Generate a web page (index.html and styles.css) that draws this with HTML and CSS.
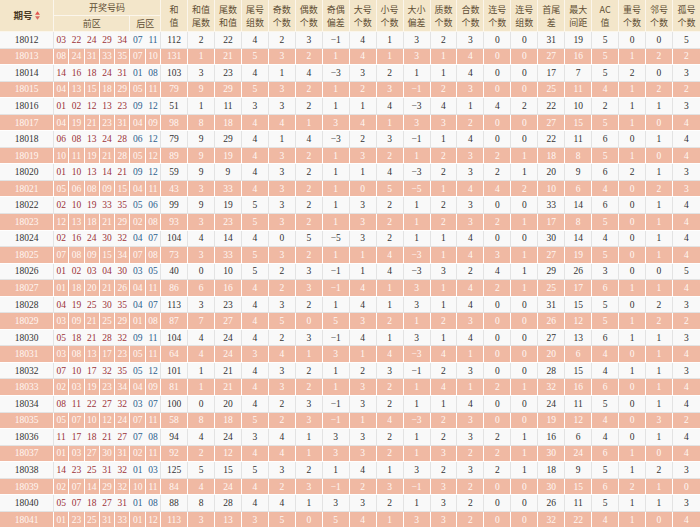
FILE: index.html
```html
<!DOCTYPE html>
<html lang="zh-CN">
<head>
<meta charset="utf-8">
<title>开奖号码走势</title>
<link rel="stylesheet" href="styles.css">
</head>
<body>
<table class="tbl">
<colgroup>
<col class="c-id">
<col class="c-ball"><col class="c-ball"><col class="c-ball"><col class="c-ball"><col class="c-ball"><col class="c-ball"><col class="c-ball">
<col class="c-st"><col class="c-st"><col class="c-st"><col class="c-st"><col class="c-st"><col class="c-st"><col class="c-st"><col class="c-st"><col class="c-st"><col class="c-st">
<col class="c-st"><col class="c-st"><col class="c-st"><col class="c-st"><col class="c-st"><col class="c-st"><col class="c-st"><col class="c-st"><col class="c-st"><col class="c-st">
</colgroup>
<thead>
<tr class="h1">
<th rowspan="2" class="qh">期号<svg class="sort" width="5" height="9" viewBox="0 0 5 9"><polygon points="0,3.8 2.5,0.3 5,3.8" fill="#e2544f"/><polygon points="0,5.2 5,5.2 2.5,8.7" fill="#d86a62"/></svg></th>
<th colspan="7" class="kj">开奖号码</th>
<th rowspan="2">和<br>值</th>
<th rowspan="2">和值<br>尾数</th>
<th rowspan="2">尾数<br>和值</th>
<th rowspan="2">尾号<br>组数</th>
<th rowspan="2">奇数<br>个数</th>
<th rowspan="2">偶数<br>个数</th>
<th rowspan="2">奇偶<br>偏差</th>
<th rowspan="2">大号<br>个数</th>
<th rowspan="2">小号<br>个数</th>
<th rowspan="2">大小<br>偏差</th>
<th rowspan="2">质数<br>个数</th>
<th rowspan="2">合数<br>个数</th>
<th rowspan="2">连号<br>个数</th>
<th rowspan="2">连号<br>组数</th>
<th rowspan="2">首尾<br>差</th>
<th rowspan="2">最大<br>间距</th>
<th rowspan="2">AC<br>值</th>
<th rowspan="2">重号<br>个数</th>
<th rowspan="2">邻号<br>个数</th>
<th rowspan="2" class="last">孤号<br>个数</th>
</tr>
<tr class="h2">
<th colspan="5">前区</th>
<th colspan="2">后区</th>
</tr>
</thead>
<tbody>
<tr class="w"><td>18012</td><td class="f">03</td><td class="f">22</td><td class="f">24</td><td class="f">29</td><td class="f">34</td><td class="b">07</td><td class="b bl">11</td><td>112</td><td>2</td><td>22</td><td>4</td><td>2</td><td>3</td><td>−1</td><td>4</td><td>1</td><td>3</td><td>2</td><td>3</td><td>0</td><td>0</td><td>31</td><td>19</td><td>5</td><td>0</td><td>0</td><td>5</td></tr>
<tr class="p"><td>18013</td><td class="f">08</td><td class="f">24</td><td class="f">31</td><td class="f">33</td><td class="f">35</td><td class="b">07</td><td class="b bl">10</td><td>131</td><td>1</td><td>21</td><td>5</td><td>3</td><td>2</td><td>1</td><td>4</td><td>1</td><td>3</td><td>1</td><td>4</td><td>0</td><td>0</td><td>27</td><td>16</td><td>5</td><td>1</td><td>2</td><td>2</td></tr>
<tr class="w"><td>18014</td><td class="f">14</td><td class="f">16</td><td class="f">18</td><td class="f">24</td><td class="f">31</td><td class="b">01</td><td class="b bl">08</td><td>103</td><td>3</td><td>23</td><td>4</td><td>1</td><td>4</td><td>−3</td><td>3</td><td>2</td><td>1</td><td>1</td><td>4</td><td>0</td><td>0</td><td>17</td><td>7</td><td>5</td><td>2</td><td>0</td><td>3</td></tr>
<tr class="p"><td>18015</td><td class="f">04</td><td class="f">13</td><td class="f">15</td><td class="f">18</td><td class="f">29</td><td class="b">05</td><td class="b bl">11</td><td>79</td><td>9</td><td>29</td><td>5</td><td>3</td><td>2</td><td>1</td><td>2</td><td>3</td><td>−1</td><td>2</td><td>3</td><td>0</td><td>0</td><td>25</td><td>11</td><td>4</td><td>1</td><td>2</td><td>2</td></tr>
<tr class="w"><td>18016</td><td class="f">01</td><td class="f">02</td><td class="f">12</td><td class="f">13</td><td class="f">23</td><td class="b">09</td><td class="b bl">12</td><td>51</td><td>1</td><td>11</td><td>3</td><td>3</td><td>2</td><td>1</td><td>1</td><td>4</td><td>−3</td><td>4</td><td>1</td><td>4</td><td>2</td><td>22</td><td>10</td><td>2</td><td>1</td><td>1</td><td>3</td></tr>
<tr class="p"><td>18017</td><td class="f">04</td><td class="f">19</td><td class="f">21</td><td class="f">23</td><td class="f">31</td><td class="b">04</td><td class="b bl">09</td><td>98</td><td>8</td><td>18</td><td>4</td><td>4</td><td>1</td><td>3</td><td>4</td><td>1</td><td>3</td><td>3</td><td>2</td><td>0</td><td>0</td><td>27</td><td>15</td><td>5</td><td>1</td><td>0</td><td>4</td></tr>
<tr class="w"><td>18018</td><td class="f">06</td><td class="f">08</td><td class="f">13</td><td class="f">24</td><td class="f">28</td><td class="b">06</td><td class="b bl">12</td><td>79</td><td>9</td><td>29</td><td>4</td><td>1</td><td>4</td><td>−3</td><td>2</td><td>3</td><td>−1</td><td>1</td><td>4</td><td>0</td><td>0</td><td>22</td><td>11</td><td>6</td><td>0</td><td>1</td><td>4</td></tr>
<tr class="p"><td>18019</td><td class="f">10</td><td class="f">11</td><td class="f">19</td><td class="f">21</td><td class="f">28</td><td class="b">05</td><td class="b bl">12</td><td>89</td><td>9</td><td>19</td><td>4</td><td>3</td><td>2</td><td>1</td><td>3</td><td>2</td><td>1</td><td>2</td><td>3</td><td>2</td><td>1</td><td>18</td><td>8</td><td>5</td><td>1</td><td>0</td><td>4</td></tr>
<tr class="w"><td>18020</td><td class="f">01</td><td class="f">10</td><td class="f">13</td><td class="f">14</td><td class="f">21</td><td class="b">09</td><td class="b bl">12</td><td>59</td><td>9</td><td>9</td><td>4</td><td>3</td><td>2</td><td>1</td><td>1</td><td>4</td><td>−3</td><td>2</td><td>3</td><td>2</td><td>1</td><td>20</td><td>9</td><td>6</td><td>2</td><td>1</td><td>3</td></tr>
<tr class="p"><td>18021</td><td class="f">05</td><td class="f">06</td><td class="f">08</td><td class="f">09</td><td class="f">15</td><td class="b">04</td><td class="b bl">11</td><td>43</td><td>3</td><td>33</td><td>4</td><td>3</td><td>2</td><td>1</td><td>0</td><td>5</td><td>−5</td><td>1</td><td>4</td><td>4</td><td>2</td><td>10</td><td>6</td><td>4</td><td>0</td><td>2</td><td>3</td></tr>
<tr class="w"><td>18022</td><td class="f">02</td><td class="f">10</td><td class="f">19</td><td class="f">33</td><td class="f">35</td><td class="b">05</td><td class="b bl">06</td><td>99</td><td>9</td><td>19</td><td>5</td><td>3</td><td>2</td><td>1</td><td>3</td><td>2</td><td>1</td><td>2</td><td>3</td><td>0</td><td>0</td><td>33</td><td>14</td><td>6</td><td>0</td><td>1</td><td>4</td></tr>
<tr class="p"><td>18023</td><td class="f">12</td><td class="f">13</td><td class="f">18</td><td class="f">21</td><td class="f">29</td><td class="b">02</td><td class="b bl">08</td><td>93</td><td>3</td><td>23</td><td>5</td><td>3</td><td>2</td><td>1</td><td>3</td><td>2</td><td>1</td><td>2</td><td>3</td><td>2</td><td>1</td><td>17</td><td>8</td><td>5</td><td>0</td><td>1</td><td>4</td></tr>
<tr class="w"><td>18024</td><td class="f">02</td><td class="f">16</td><td class="f">24</td><td class="f">30</td><td class="f">32</td><td class="b">04</td><td class="b bl">07</td><td>104</td><td>4</td><td>14</td><td>4</td><td>0</td><td>5</td><td>−5</td><td>3</td><td>2</td><td>1</td><td>1</td><td>4</td><td>0</td><td>0</td><td>30</td><td>14</td><td>4</td><td>0</td><td>1</td><td>4</td></tr>
<tr class="p"><td>18025</td><td class="f">07</td><td class="f">08</td><td class="f">09</td><td class="f">15</td><td class="f">34</td><td class="b">07</td><td class="b bl">08</td><td>73</td><td>3</td><td>33</td><td>5</td><td>3</td><td>2</td><td>1</td><td>1</td><td>4</td><td>−3</td><td>1</td><td>4</td><td>3</td><td>1</td><td>27</td><td>19</td><td>5</td><td>0</td><td>1</td><td>4</td></tr>
<tr class="w"><td>18026</td><td class="f">01</td><td class="f">02</td><td class="f">03</td><td class="f">04</td><td class="f">30</td><td class="b">03</td><td class="b bl">05</td><td>40</td><td>0</td><td>10</td><td>5</td><td>2</td><td>3</td><td>−1</td><td>1</td><td>4</td><td>−3</td><td>3</td><td>2</td><td>4</td><td>1</td><td>29</td><td>26</td><td>3</td><td>0</td><td>0</td><td>5</td></tr>
<tr class="p"><td>18027</td><td class="f">01</td><td class="f">18</td><td class="f">20</td><td class="f">21</td><td class="f">26</td><td class="b">04</td><td class="b bl">11</td><td>86</td><td>6</td><td>16</td><td>4</td><td>2</td><td>3</td><td>−1</td><td>4</td><td>1</td><td>3</td><td>1</td><td>4</td><td>2</td><td>1</td><td>25</td><td>17</td><td>6</td><td>1</td><td>1</td><td>4</td></tr>
<tr class="w"><td>18028</td><td class="f">04</td><td class="f">19</td><td class="f">25</td><td class="f">30</td><td class="f">35</td><td class="b">04</td><td class="b bl">07</td><td>113</td><td>3</td><td>23</td><td>4</td><td>3</td><td>2</td><td>1</td><td>4</td><td>1</td><td>3</td><td>1</td><td>4</td><td>0</td><td>0</td><td>31</td><td>15</td><td>5</td><td>0</td><td>2</td><td>3</td></tr>
<tr class="p"><td>18029</td><td class="f">03</td><td class="f">09</td><td class="f">21</td><td class="f">25</td><td class="f">29</td><td class="b">01</td><td class="b bl">08</td><td>87</td><td>7</td><td>27</td><td>4</td><td>5</td><td>0</td><td>5</td><td>3</td><td>2</td><td>1</td><td>2</td><td>3</td><td>0</td><td>0</td><td>26</td><td>12</td><td>5</td><td>1</td><td>2</td><td>2</td></tr>
<tr class="w"><td>18030</td><td class="f">05</td><td class="f">18</td><td class="f">21</td><td class="f">28</td><td class="f">32</td><td class="b">09</td><td class="b bl">11</td><td>104</td><td>4</td><td>24</td><td>4</td><td>2</td><td>3</td><td>−1</td><td>4</td><td>1</td><td>3</td><td>1</td><td>4</td><td>0</td><td>0</td><td>27</td><td>13</td><td>6</td><td>1</td><td>1</td><td>3</td></tr>
<tr class="p"><td>18031</td><td class="f">03</td><td class="f">08</td><td class="f">13</td><td class="f">17</td><td class="f">23</td><td class="b">05</td><td class="b bl">11</td><td>64</td><td>4</td><td>24</td><td>3</td><td>4</td><td>1</td><td>3</td><td>1</td><td>4</td><td>−3</td><td>4</td><td>1</td><td>0</td><td>0</td><td>20</td><td>6</td><td>4</td><td>0</td><td>1</td><td>4</td></tr>
<tr class="w"><td>18032</td><td class="f">07</td><td class="f">10</td><td class="f">17</td><td class="f">32</td><td class="f">35</td><td class="b">05</td><td class="b bl">12</td><td>101</td><td>1</td><td>21</td><td>4</td><td>3</td><td>2</td><td>1</td><td>2</td><td>3</td><td>−1</td><td>2</td><td>3</td><td>0</td><td>0</td><td>28</td><td>15</td><td>4</td><td>1</td><td>1</td><td>3</td></tr>
<tr class="p"><td>18033</td><td class="f">02</td><td class="f">03</td><td class="f">19</td><td class="f">23</td><td class="f">34</td><td class="b">04</td><td class="b bl">09</td><td>81</td><td>1</td><td>21</td><td>4</td><td>3</td><td>2</td><td>1</td><td>3</td><td>2</td><td>1</td><td>4</td><td>1</td><td>2</td><td>1</td><td>32</td><td>16</td><td>6</td><td>0</td><td>1</td><td>4</td></tr>
<tr class="w"><td>18034</td><td class="f">08</td><td class="f">11</td><td class="f">22</td><td class="f">27</td><td class="f">32</td><td class="b">03</td><td class="b bl">07</td><td>100</td><td>0</td><td>20</td><td>4</td><td>2</td><td>3</td><td>−1</td><td>3</td><td>2</td><td>1</td><td>1</td><td>4</td><td>0</td><td>0</td><td>24</td><td>11</td><td>5</td><td>0</td><td>1</td><td>4</td></tr>
<tr class="p"><td>18035</td><td class="f">05</td><td class="f">07</td><td class="f">10</td><td class="f">12</td><td class="f">24</td><td class="b">07</td><td class="b bl">11</td><td>58</td><td>8</td><td>18</td><td>5</td><td>2</td><td>3</td><td>−1</td><td>1</td><td>4</td><td>−3</td><td>2</td><td>3</td><td>0</td><td>0</td><td>19</td><td>12</td><td>4</td><td>0</td><td>3</td><td>2</td></tr>
<tr class="w"><td>18036</td><td class="f">11</td><td class="f">17</td><td class="f">18</td><td class="f">21</td><td class="f">27</td><td class="b">07</td><td class="b bl">08</td><td>94</td><td>4</td><td>24</td><td>3</td><td>4</td><td>1</td><td>3</td><td>3</td><td>2</td><td>1</td><td>2</td><td>3</td><td>2</td><td>1</td><td>16</td><td>6</td><td>4</td><td>0</td><td>1</td><td>4</td></tr>
<tr class="p"><td>18037</td><td class="f">01</td><td class="f">03</td><td class="f">27</td><td class="f">30</td><td class="f">31</td><td class="b">02</td><td class="b bl">11</td><td>92</td><td>2</td><td>12</td><td>4</td><td>4</td><td>1</td><td>3</td><td>3</td><td>2</td><td>1</td><td>3</td><td>2</td><td>2</td><td>1</td><td>30</td><td>24</td><td>6</td><td>1</td><td>0</td><td>4</td></tr>
<tr class="w"><td>18038</td><td class="f">14</td><td class="f">23</td><td class="f">25</td><td class="f">31</td><td class="f">32</td><td class="b">01</td><td class="b bl">03</td><td>125</td><td>5</td><td>15</td><td>5</td><td>3</td><td>2</td><td>1</td><td>4</td><td>1</td><td>3</td><td>2</td><td>3</td><td>2</td><td>1</td><td>18</td><td>9</td><td>5</td><td>1</td><td>2</td><td>3</td></tr>
<tr class="p"><td>18039</td><td class="f">02</td><td class="f">07</td><td class="f">14</td><td class="f">29</td><td class="f">32</td><td class="b">10</td><td class="b bl">11</td><td>84</td><td>4</td><td>24</td><td>4</td><td>2</td><td>3</td><td>−1</td><td>2</td><td>3</td><td>−1</td><td>3</td><td>2</td><td>0</td><td>0</td><td>30</td><td>15</td><td>6</td><td>2</td><td>1</td><td>0</td></tr>
<tr class="w"><td>18040</td><td class="f">05</td><td class="f">07</td><td class="f">18</td><td class="f">27</td><td class="f">31</td><td class="b">01</td><td class="b bl">08</td><td>88</td><td>8</td><td>28</td><td>4</td><td>4</td><td>1</td><td>3</td><td>3</td><td>2</td><td>1</td><td>3</td><td>2</td><td>0</td><td>0</td><td>26</td><td>11</td><td>5</td><td>1</td><td>1</td><td>3</td></tr>
<tr class="p"><td>18041</td><td class="f">01</td><td class="f">23</td><td class="f">25</td><td class="f">31</td><td class="f">33</td><td class="b">01</td><td class="b bl">12</td><td>113</td><td>3</td><td>13</td><td>3</td><td>5</td><td>0</td><td>5</td><td>4</td><td>1</td><td>3</td><td>3</td><td>2</td><td>0</td><td>0</td><td>32</td><td>22</td><td>4</td><td>1</td><td>0</td><td>4</td></tr>
</tbody>
</table>
</body>
</html>
```
FILE: styles.css
```css
html, body {
  margin: 0;
  padding: 0;
  background: #ffffff;
}

.tbl {
  width: 700px;
  table-layout: fixed;
  border-collapse: separate;
  border-spacing: 0;
  font-family: "Liberation Serif", "Noto Sans CJK SC", serif;
  font-size: 9.5px;
  color: #333333;
}

.c-id { width: 54px; }
.c-ball { width: 15.3px; }
.c-st { width: 26.945px; }

.tbl th {
  background: #f3e6ca;
  color: #5f4e34;
  font-family: "Noto Sans CJK SC", sans-serif;
  font-weight: normal;
  font-size: 9px;
  line-height: 13px;
  padding: 0;
  text-align: center;
  vertical-align: middle;
  border-right: 1px solid #fbf6ec;
  border-bottom: 1px solid #fbf6ec;
  white-space: nowrap;
}

.tbl th.last { border-right: 0; }

.h1 { height: 16px; }
.h2 { height: 16px; }

.tbl th.qh {
  font-weight: bold;
  font-size: 9.5px;
  color: #4a3b25;
}

.sort {
  display: inline-block;
  vertical-align: -1px;
  margin-left: 2px;
}

.tbl tbody tr { height: 16.55px; }

.tbl td {
  padding: 0;
  text-align: center;
  vertical-align: middle;
  line-height: 12px;
  white-space: nowrap;
  border-right: 1px solid #e3e3e3;
  border-bottom: 1px solid #e3e3e3;
}

.tbl td:last-child { border-right: 0; }

tr.w td { background: #f9f9f9; }
tr.w td.f { color: #9c3338; border-right-color: #f9f9f9; }
tr.w td.b { color: #2d5f8e; border-right-color: #f9f9f9; }
tr.w td.bl { border-right-color: #e3e3e3; }

tr.p td {
  background: #f0b9a3;
  color: #fff7f3;
  border-right-color: #ffffff;
  border-bottom-color: #ffffff;
}
```
